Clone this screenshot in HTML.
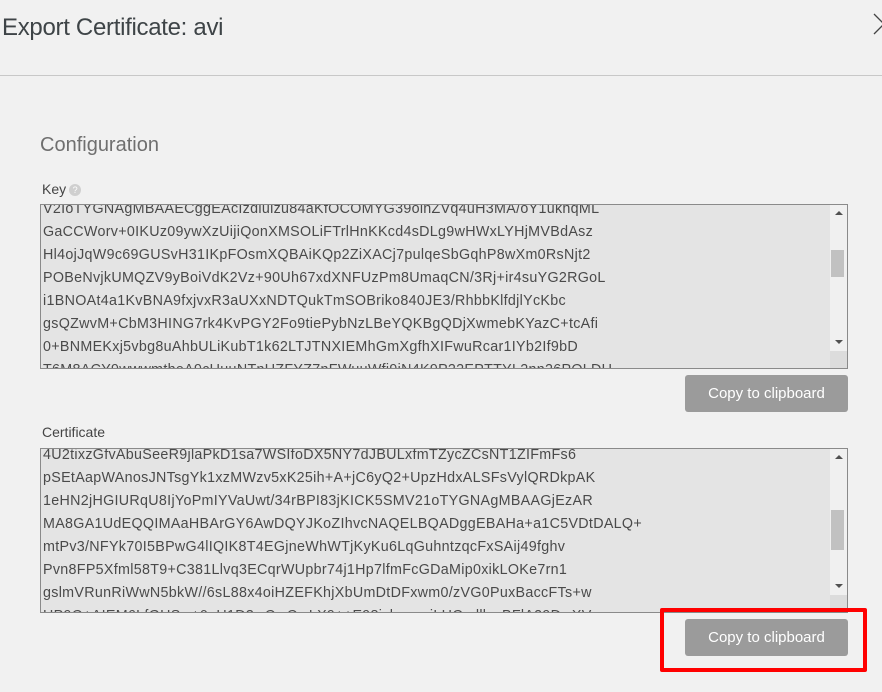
<!DOCTYPE html>
<html><head><style>
body{margin:0;width:882px;height:692px;background:#f1f1f1;font-family:"Liberation Sans",sans-serif;position:relative;overflow:hidden}
.t{position:absolute;left:2px;top:14px;font-size:24px;color:#3e4447;letter-spacing:-0.3px}
.x{position:absolute;left:872px;top:12px;width:14px;height:24px}
.hr{position:absolute;left:0;top:75px;width:882px;height:1px;background:#c8c8c8}
.cfg{position:absolute;left:40px;top:134px;font-size:20px;color:#6f6f6f}
.lbl{position:absolute;left:42px;font-size:14px;color:#444}
.box{position:absolute;left:40px;width:806px;height:163px;border:1px solid #8a8a8a;background:#e4e4e4;overflow:hidden}
.ln{position:absolute;left:2px;font-size:14.3px;color:#4a4a4a;white-space:nowrap;letter-spacing:0.3px}
.sb{position:absolute;right:0;top:0;width:17px;height:100%;background:#f0f0f0}
.th{position:absolute;left:1px;width:13px;height:27px;background:#c1c1c1}
.up,.dn{position:absolute;left:5px;width:0;height:0;border-left:4px solid transparent;border-right:4px solid transparent}
.up{top:6px;border-bottom:4px solid #505050}
.dn{bottom:24px;border-top:4px solid #505050}
.rz{position:absolute;right:0;bottom:0;width:17px;height:17px;background:#dcdcdc}
.btn{position:absolute;left:685px;width:163px;height:37px;background:#9b9b9b;border-radius:3px;color:#fff;font-size:15px;text-align:center;line-height:37px}
.red{position:absolute;left:660px;top:608px;width:199px;height:56px;border:4px solid #f00;border-radius:2px}
.q{display:inline-block;width:12px;height:12px;border-radius:50%;background:#cfcfcf;color:#fff;font-size:9px;text-align:center;line-height:12px;vertical-align:1px;margin-left:3px}
</style></head><body>
<div class="t">Export Certificate: avi</div>
<svg class="x" viewBox="0 0 14 24"><path d="M2 2 L12 12 L2 22" fill="none" stroke="#444" stroke-width="1.3"/></svg>
<div class="hr"></div>
<div class="cfg">Configuration</div>
<div class="lbl" style="top:181px">Key<span class="q">?</span></div>
<div class="box" style="top:204px">
<div class="ln" style="top:-4px">V2IoTYGNAgMBAAECggEAcIzdiulzu84aKfOCOMYG39oihZVq4uH3MA/oY1ukhqML</div>
<div class="ln" style="top:19px">GaCCWorv+0IKUz09ywXzUijiQonXMSOLiFTrlHnKKcd4sDLg9wHWxLYHjMVBdAsz</div>
<div class="ln" style="top:42px">Hl4ojJqW9c69GUSvH31IKpFOsmXQBAiKQp2ZiXACj7pulqeSbGqhP8wXm0RsNjt2</div>
<div class="ln" style="top:65px">POBeNvjkUMQZV9yBoiVdK2Vz+90Uh67xdXNFUzPm8UmaqCN/3Rj+ir4suYG2RGoL</div>
<div class="ln" style="top:88px">i1BNOAt4a1KvBNA9fxjvxR3aUXxNDTQukTmSOBriko840JE3/RhbbKlfdjlYcKbc</div>
<div class="ln" style="top:111px">gsQZwvM+CbM3HING7rk4KvPGY2Fo9tiePybNzLBeYQKBgQDjXwmebKYazC+tcAfi</div>
<div class="ln" style="top:134px">0+BNMEKxj5vbg8uAhbULiKubT1k62LTJTNXIEMhGmXgfhXIFwuRcar1IYb2If9bD</div>
<div class="ln" style="top:157px">T6M8ACY9wwwmtheA9cUuuNTnUZFYZ7nFWuuWfi9iN4K9P22EPTTYL2nn26POLDU</div>
<div class="sb"><div class="up"></div><div class="th" style="top:45px"></div><div class="dn"></div><div class="rz"></div></div>
</div>
<div class="btn" style="top:375px">Copy to clipboard</div>
<div class="lbl" style="top:424px">Certificate</div>
<div class="box" style="top:448px">
<div class="ln" style="top:-2px">4U2tixzGfvAbuSeeR9jlaPkD1sa7WSIfoDX5NY7dJBULxfmTZycZCsNT1ZIFmFs6</div>
<div class="ln" style="top:21px">pSEtAapWAnosJNTsgYk1xzMWzv5xK25ih+A+jC6yQ2+UpzHdxALSFsVylQRDkpAK</div>
<div class="ln" style="top:44px">1eHN2jHGIURqU8IjYoPmIYVaUwt/34rBPI83jKICK5SMV21oTYGNAgMBAAGjEzAR</div>
<div class="ln" style="top:67px">MA8GA1UdEQQIMAaHBArGY6AwDQYJKoZIhvcNAQELBQADggEBAHa+a1C5VDtDALQ+</div>
<div class="ln" style="top:90px">mtPv3/NFYk70I5BPwG4lIQIK8T4EGjneWhWTjKyKu6LqGuhntzqcFxSAij49fghv</div>
<div class="ln" style="top:113px">Pvn8FP5Xfml58T9+C381Llvq3ECqrWUpbr74j1Hp7lfmFcGDaMip0xikLOKe7rn1</div>
<div class="ln" style="top:136px">gslmVRunRiWwN5bkW//6sL88x4oiHZEFKhjXbUmDtDFxwm0/zVG0PuxBaccFTs+w</div>
<div class="ln" style="top:159px">HP9Q+AIEM6LfGHSw+0aH1D3wQwOwLX9++E98ishwwwiLHQvdlluyBFlA29DwXV</div>
<div class="sb"><div class="up"></div><div class="th" style="top:61px;height:40px"></div><div class="dn"></div><div class="rz"></div></div>
</div>
<div class="btn" style="top:619px">Copy to clipboard</div>
<div class="red"></div>
</body></html>
